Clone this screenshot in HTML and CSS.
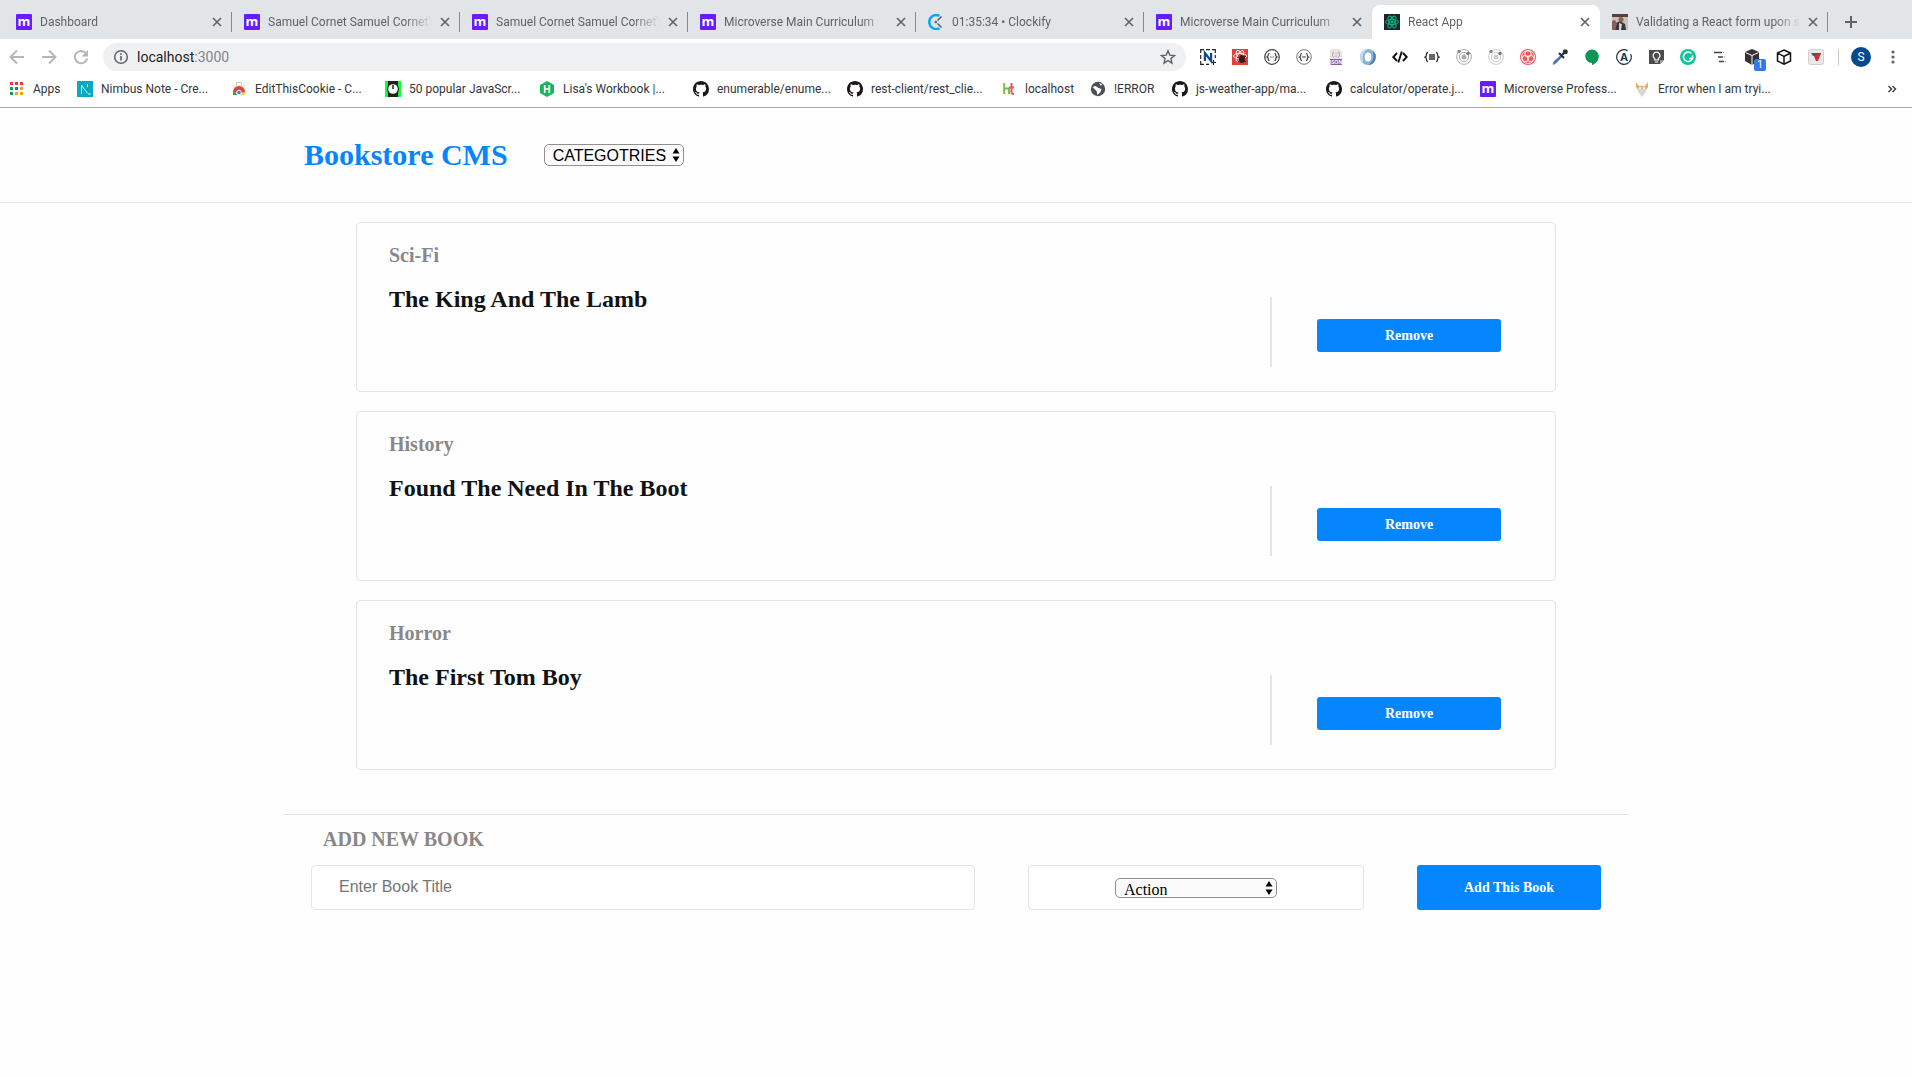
FILE: index.html
```html
<!DOCTYPE html>
<html lang="en">
<head>
<meta charset="utf-8">
<title>React App</title>
<link rel="stylesheet" href="styles.css">
</head>
<body>
<svg class="sprite" aria-hidden="true">
  <symbol id="close" viewBox="0 0 16 16"><path d="M4 4l8 8M12 4l-8 8" stroke="#5f6368" stroke-width="1.6" fill="none"/></symbol>
  <symbol id="micro" viewBox="0 0 16 16"><rect width="16" height="16" rx="1" fill="#6a1bff"/><text x="8" y="11.5" text-anchor="middle" class="micro-letter">m</text></symbol>
  <symbol id="github" viewBox="0 0 16 16"><path fill="#1b1817" d="M8 0C3.58 0 0 3.58 0 8c0 3.54 2.29 6.53 5.47 7.59.4.07.55-.17.55-.38 0-.19-.01-.82-.01-1.49-2.01.37-2.53-.49-2.69-.94-.09-.23-.48-.94-.82-1.13-.28-.15-.68-.52-.01-.53.63-.01 1.08.58 1.23.82.72 1.21 1.87.87 2.33.66.07-.52.28-.87.51-1.07-1.78-.2-3.64-.89-3.64-3.95 0-.87.31-1.59.82-2.15-.08-.2-.36-1.02.08-2.12 0 0 .67-.21 2.2.82.64-.18 1.32-.27 2-.27s1.36.09 2 .27c1.53-1.04 2.2-.82 2.2-.82.44 1.1.16 1.92.08 2.12.51.56.82 1.27.82 2.15 0 3.07-1.87 3.75-3.65 3.95.29.25.54.73.54 1.48 0 1.07-.01 1.93-.01 2.2 0 .21.15.46.55.38A8.01 8.01 0 0 0 16 8c0-4.42-3.58-8-8-8z"/></symbol>
  <symbol id="updown" viewBox="0 0 8 14"><path d="M4 0l3.500 5.500h-7zM4 14l3.500-5.500h-7z" fill="#000"/></symbol>
  <symbol id="atom" viewBox="0 0 16 16"><g fill="none" stroke="currentColor"><ellipse cx="8" cy="8" rx="6.500" ry="2.600"/><ellipse cx="8" cy="8" rx="6.500" ry="2.600" transform="rotate(60 8 8)"/><ellipse cx="8" cy="8" rx="6.500" ry="2.600" transform="rotate(120 8 8)"/></g><circle cx="8" cy="8" r="1.500" fill="currentColor"/></symbol>
  <symbol id="orbit" viewBox="0 0 16 16"><g fill="none" stroke="currentColor"><circle cx="8" cy="8" r="7.400"/><circle cx="8" cy="8" r="4.600"/></g><circle cx="8" cy="8" r="2.500" fill="currentColor"/><circle cx="3" cy="2.500" r="1.700" fill="#888"/><circle cx="12" cy="4.500" r="1.700" fill="#777"/></symbol>
</svg>

<div class="browser">
  <div class="tabs">
    <div class="tab"><svg class="icon"><use href="#micro"/></svg><span class="tab-title">Dashboard</span><button class="close" aria-label="Close tab"><svg class="icon"><use href="#close"/></svg></button></div>
    <div class="tab"><svg class="icon"><use href="#micro"/></svg><span class="tab-title">Samuel Cornet Samuel Cornet's</span><button class="close" aria-label="Close tab"><svg class="icon"><use href="#close"/></svg></button></div>
    <div class="tab"><svg class="icon"><use href="#micro"/></svg><span class="tab-title">Samuel Cornet Samuel Cornet's</span><button class="close" aria-label="Close tab"><svg class="icon"><use href="#close"/></svg></button></div>
    <div class="tab"><svg class="icon"><use href="#micro"/></svg><span class="tab-title">Microverse Main Curriculum</span><button class="close" aria-label="Close tab"><svg class="icon"><use href="#close"/></svg></button></div>
    <div class="tab"><svg class="icon" viewBox="0 0 16 16"><path d="M11.500 1.800A7 7 0 1 0 11.500 14.200" fill="none" stroke="#03a9f4" stroke-width="2.400"/><path d="M9.500 6.500L13.500 2.500M9.500 9.500l4 4" stroke="#5f6368" stroke-width="1.600"/><circle cx="7.800" cy="8" r="1.300" fill="#5f6368"/></svg><span class="tab-title">01:35:34 • Clockify</span><button class="close" aria-label="Close tab"><svg class="icon"><use href="#close"/></svg></button></div>
    <div class="tab"><svg class="icon"><use href="#micro"/></svg><span class="tab-title">Microverse Main Curriculum</span><button class="close" aria-label="Close tab"><svg class="icon"><use href="#close"/></svg></button></div>
    <div class="tab active"><svg class="icon react"><use href="#atom"/></svg><span class="tab-title">React App</span><button class="close" aria-label="Close tab"><svg class="icon"><use href="#close"/></svg></button></div>
    <div class="tab"><svg class="icon" viewBox="0 0 16 16"><rect width="16" height="16" fill="#c9c0bb"/><path d="M0 0h16v3H0z" fill="#54403b"/><path d="M3 16l1-7 4-2 5 3 1 6z" fill="#38353d"/><circle cx="9" cy="5.500" r="2.500" fill="#8b6253"/><path d="M0 7l3-1 2 4-2 6H0z" fill="#855f55"/><path d="M7 9l3 1-1 6H7z" fill="#d6d5dc"/></svg><span class="tab-title">Validating a React form upon submit</span><button class="close" aria-label="Close tab"><svg class="icon"><use href="#close"/></svg></button></div>
    <button class="new-tab" aria-label="New tab"><svg class="icon" viewBox="0 0 16 16"><path d="M8 2v12M2 8h12" stroke="#5f6368" stroke-width="2"/></svg></button>
  </div>

  <div class="toolbar">
    <div class="history">
      <button aria-label="Back"><svg class="icon" viewBox="0 0 16 16"><path d="M15 8H2M8 1.500L1.500 8 8 14.500" fill="none" stroke="#b5b7ba" stroke-width="2"/></svg></button>
      <button aria-label="Forward"><svg class="icon" viewBox="0 0 16 16"><path d="M1 8h13M8 1.500L14.500 8 8 14.500" fill="none" stroke="#b5b7ba" stroke-width="2"/></svg></button>
      <button aria-label="Reload"><svg class="icon" viewBox="0 0 16 16"><path d="M13 4.200A6.200 6.200 0 1 0 14.200 9.500" fill="none" stroke="#b5b7ba" stroke-width="2"/><path d="M15 1v6.500H8.500z" fill="#b5b7ba"/></svg></button>
    </div>
    <div class="omnibox">
      <svg class="icon" viewBox="0 0 16 16"><circle cx="8" cy="8" r="6.300" fill="none" stroke="#5f6368" stroke-width="1.500"/><path d="M8 7v4.500M8 4.300v1.600" stroke="#5f6368" stroke-width="1.600"/></svg>
      <span class="url">localhost<span class="port">:3000</span></span>
      <svg class="icon" viewBox="0 0 16 16"><path d="M8 1.800l1.800 4.300 4.700.4-3.600 3.100 1.100 4.600L8 11.700l-4 2.500 1.100-4.600L1.500 6.500l4.700-.4z" fill="none" stroke="#5f6368" stroke-width="1.400"/></svg>
    </div>
    <div class="extensions">
      <svg class="icon" viewBox="0 0 16 16"><path d="M.7 4V.7H4M6 .7h4M12 .7h3.300V4M.7 6v4M.7 12v3.300H4M6 15.300h3M15.300 6v3M11 13.500h5M13.500 11v5" fill="none" stroke="#222" stroke-width="1.200"/><path d="M4.900 12V4l6.200 8V4" fill="none" stroke="#0b4a94" stroke-width="2.200"/></svg>
      <svg class="icon" viewBox="0 0 16 16"><rect width="16" height="16" fill="#e2403a"/><g fill="none" stroke="#fff" stroke-width=".9"><ellipse cx="8" cy="7" rx="6.500" ry="2.600"/><ellipse cx="8" cy="7" rx="6" ry="2.500" transform="rotate(60 8 7)"/><ellipse cx="8" cy="7" rx="6" ry="2.500" transform="rotate(120 8 7)"/></g><ellipse cx="10" cy="10" rx="3" ry="4" fill="#321b1b"/><path d="M5 8l9 5M6 13l8-6" stroke="#321b1b"/></svg>
      <svg class="icon" viewBox="0 0 16 16"><circle cx="8" cy="8" r="7.300" fill="none" stroke="#444" stroke-width="1.200"/><path d="M5.500 4.500q-1.300 0-1.300 1.500T3 8q1.200.3 1.200 2t1.300 1.500M10.500 4.500q1.300 0 1.300 1.500T13 8q-1.200.3-1.200 2t-1.300 1.500" fill="none" stroke="#333" stroke-width="1.200"/><path d="M6 8h4" stroke="#555" stroke-dasharray="1 .5"/></svg>
      <svg class="icon" viewBox="0 0 16 16"><circle cx="8" cy="8" r="7.300" fill="none" stroke="#777"/><path d="M6 4.500q-1.300 0-1.300 1.500T3.500 8q1.200.3 1.200 2T6 11.500M10 4.500q1.300 0 1.300 1.500T12.500 8q-1.200.3-1.200 2T10 11.500M6 8h4" fill="none" stroke="#444" stroke-width="1.200"/></svg>
      <svg class="icon" viewBox="0 0 16 16"><path d="M2 0h9l3 3v13H2z" fill="#e7e5dc"/><path d="M2 10h12v6H2z" fill="#9158a3"/><path d="M6 3q-1 0-1 1.200T4 5.700q1 .3 1 1.500T6 8.500M10 3q1 0 1 1.200t1 1.500q-1 .3-1 1.500t-1 1.300M8 4v1M8 6.500v1.500" fill="none" stroke="#b296ba"/><text x="8" y="15" text-anchor="middle" class="json-letter">JSON</text></svg>
      <svg class="icon" viewBox="0 0 16 16"><circle cx="8" cy="8" r="8" fill="#8cb2d8"/><path d="M8 0a8 8 0 0 0-5 14c-1-7 0-11 5-14z" fill="#c7dcef"/><path d="M8 16a8 8 0 0 0 5-14c1 7 0 11-5 14z" fill="#4f80b5"/><ellipse cx="8" cy="8" rx="3.300" ry="4.500" fill="#fff"/></svg>
      <svg class="icon" viewBox="0 0 16 16"><path d="M5 4L1.300 8 5 12M11 4l3.700 4L11 12M9.800 2.500L6.300 13.500" fill="none" stroke="#111" stroke-width="1.900"/></svg>
      <svg class="icon" viewBox="0 0 16 16"><path d="M4 3.500q-1.500 0-1.500 2T1 8q1.500.4 1.500 2.500t1.500 2M12 3.500q1.500 0 1.500 2T15 8q-1.500.4-1.500 2.500t-1.500 2M5 6h6M5 8h6M5 10h6" fill="none" stroke="#333" stroke-width="1.300"/></svg>
      <svg class="icon orbit"><use href="#orbit"/></svg>
      <svg class="icon orbit faint"><use href="#orbit"/></svg>
      <svg class="icon" viewBox="0 0 16 16"><circle cx="8" cy="8" r="8" fill="#f4565b"/><g fill="none" stroke="#fff" stroke-width=".9"><circle cx="8" cy="5" r="3.200"/><circle cx="10.700" cy="9.500" r="3.200"/><circle cx="5.300" cy="9.500" r="3.200"/><circle cx="8" cy="8" r="6.500"/></g></svg>
      <svg class="icon" viewBox="0 0 16 16"><path d="M9 6l1.500 1.500-7 7L1 15.500 1.700 12.700z" fill="#4169d1" stroke="#7d8aa0" stroke-width=".7"/><path d="M7 4l5 5M9.500 6.500L14 2" stroke="#2d3036" stroke-width="2.200"/><circle cx="13.300" cy="2.700" r="2.500" fill="#2d3036"/></svg>
      <svg class="icon" viewBox="0 0 16 16"><path d="M8 .5a6.700 6.700 0 0 1 0 13.400V16C3.500 14.500 1.300 11 1.300 7.200A6.700 6.700 0 0 1 8 .5z" fill="#0b9557" transform="matrix(-1 0 0 1 16 0)"/></svg>
      <svg class="icon" viewBox="0 0 16 16"><circle cx="8" cy="8" r="7.300" fill="none" stroke="#1f3352" stroke-width="1.200" stroke-dasharray="41 5" transform="rotate(-25 8 8)"/><text x="8" y="12" text-anchor="middle" class="apollo-letter">A</text></svg>
      <svg class="icon" viewBox="0 0 16 16"><path d="M1 1h15v10l-4 4H1z" fill="#4c4c4c"/><path d="M12 15v-4h4z" fill="#9a9a9a"/><path d="M6.700 11V9.500a3.400 3.400 0 1 1 3.600 0V11zM7 13h3" fill="none" stroke="#fff" stroke-width="1.200"/></svg>
      <svg class="icon" viewBox="0 0 16 16"><circle cx="8" cy="8" r="8" fill="#12c29a"/><path d="M11.500 4.500a4.700 4.700 0 1 0 1 5H9M12.500 6.500v4" fill="none" stroke="#fff" stroke-width="1.600"/></svg>
      <svg class="icon" viewBox="0 0 16 16"><path d="M2 3.500h8M6 8h5M7 12.500h5" stroke="#444" stroke-width="1.300"/><path d="M11 3.500h1M12 8h1M13 12.500h1" stroke="#888"/></svg>
      <span class="counted"><svg class="icon" viewBox="0 0 16 16"><path d="M8 0l7 3v9l-7 4-7-4V3z" fill="#333"/><path d="M1.500 3.500L8 6.500l6.500-3M8 6.500V16" fill="none" stroke="#fff" stroke-width="1"/></svg><span class="count">1</span></span>
      <svg class="icon" viewBox="0 0 16 16"><path d="M8 1l6.500 3v8L8 15.200 1.500 12V4zM1.500 4L8 7.500 14.500 4M8 7.500v7.700" fill="none" stroke="#111" stroke-width="1.500"/></svg>
      <svg class="icon" viewBox="0 0 16 16"><rect x=".5" y=".5" width="15" height="15" rx="2" fill="#e9e9e9" stroke="#cfcfcf"/><path d="M3 4h10l-1 3H5z" fill="#555"/><path d="M6 7l7-3-3 8H8z" fill="#d92b2b"/></svg>
    </div>
    <span class="divider"></span>
    <button class="avatar" aria-label="Profile">S</button>
    <button class="menu" aria-label="Menu"><svg class="icon" viewBox="0 0 16 16"><g fill="#5f6368"><circle cx="8" cy="3" r="1.600"/><circle cx="8" cy="8" r="1.600"/><circle cx="8" cy="13" r="1.600"/></g></svg></button>
  </div>

  <nav class="bookmarks" aria-label="Bookmarks">
    <a class="apps" href="#"><svg class="icon" viewBox="0 0 16 16"><g><path d="M1 1h3v3H1zM6 1h3v3H6zM11 1h3v3h-3z" fill="#ee3a32"/><path d="M1 6h3v3H1zM1 11h3v3H1z" fill="#1e9a55"/><path d="M6 6h3v3H6z" fill="#1a73e8"/><path d="M11 6h3v3h-3zM6 11h3v3H6zM11 11h3v3h-3z" fill="#f3a126"/></g></svg>Apps</a>
    <a class="wide" href="#"><svg class="icon" viewBox="0 0 16 16"><rect width="16" height="16" fill="#09a9c2"/><path d="M4.500 13V4l6 8.500M10.500 3v3M11 13h3" fill="none" stroke="#c8f0f5"/></svg>Nimbus Note - Cre...</a>
    <a class="wide" href="#"><svg class="icon" viewBox="0 0 16 16"><path d="M2 4h12v10H2z" fill="#e8e8e8"/><path d="M5.500 4V1.500h5V4" fill="none" stroke="#ccc"/><path d="M2 11a6 6 0 0 1 12 0l-4 1H6z" fill="#dd4436"/><path d="M2 10v4h5z" fill="#2ba24c"/><path d="M14 11v3H8z" fill="#fccd36"/><circle cx="8" cy="11.500" r="2.300" fill="#3d7ee8" stroke="#fff"/></svg>EditThisCookie - C...</a>
    <a class="wide" href="#"><svg class="icon" viewBox="0 0 16 16"><rect width="16" height="16" fill="#0bff37"/><path d="M3 0h10v4l1 4-1 4v4H3v-4L2 8l1-4z" fill="#222"/><circle cx="8" cy="8" r="4.800" fill="#fff"/><path d="M8 8V4" stroke="#222" stroke-width="1.500"/></svg>50 popular JavaScr...</a>
    <a class="wide" href="#"><svg class="icon" viewBox="0 0 16 16"><path d="M8 0l7 4v8l-7 4-7-4V4z" fill="#18b55b"/><path d="M5.700 4v8M10.300 4v8M5.700 8h4.600" stroke="#fff" stroke-width="1.700"/></svg>Lisa's Workbook |...</a>
    <a class="wide" href="#"><svg class="icon"><use href="#github"/></svg>enumerable/enume...</a>
    <a class="wide" href="#"><svg class="icon"><use href="#github"/></svg>rest-client/rest_clie...</a>
    <a class="host" href="#"><svg class="icon" viewBox="0 0 16 16"><path d="M3.200 2v11M3.200 7.500H9M8 7.500V13" fill="none" stroke="#75bd45" stroke-width="2"/><path d="M10.500 2v9.500q0 1.500 2.500 1.500M8 6.500h5" fill="none" stroke="#ee5261" stroke-width="2"/></svg>localhost</a>
    <a class="error" href="#"><svg class="icon" viewBox="0 0 16 16"><circle cx="8" cy="8" r="7.200" fill="#4b4f54"/><path d="M2.500 6l3-1 3 2 3 1-1 3-3 3-1-4zM9 2l3 1-1 2z" fill="#fff"/></svg>!ERROR</a>
    <a class="wide" href="#"><svg class="icon"><use href="#github"/></svg>js-weather-app/ma...</a>
    <a class="wide" href="#"><svg class="icon"><use href="#github"/></svg>calculator/operate.j...</a>
    <a class="wide" href="#"><svg class="icon"><use href="#micro"/></svg>Microverse Profess...</a>
    <a class="wide" href="#"><svg class="icon" viewBox="0 0 16 16"><path d="M2 1l3 4h6l3-4v5l-3 5H5L2 6z" fill="#e9ad65"/><path d="M4 7l4 1 4-1v4l-4 5-4-5z" fill="#d9d8d6"/><circle cx="6" cy="7" r="1" fill="#fff"/><circle cx="10" cy="7" r="1" fill="#fff"/></svg>Error when I am tryi...</a>
    <button class="more" aria-label="More bookmarks"><svg class="icon" viewBox="0 0 16 16"><path d="M4.500 5l3 3-3 3M8.500 5l3 3-3 3" fill="none" stroke="#444" stroke-width="1.500"/></svg></button>
  </nav>
</div>

<header class="site-header">
  <div class="header-inner">
    <h1>Bookstore CMS</h1>
    <span class="picker filter">
      <select aria-label="Filter by category"><option>CATEGOTRIES</option></select>
      <svg class="arrows"><use href="#updown"/></svg>
    </span>
  </div>
</header>

<main>
  <section class="books">
    <article class="book">
      <div class="info"><h3>Sci-Fi</h3><h2>The King And The Lamb</h2></div>
      <div class="actions"><button class="primary">Remove</button></div>
    </article>
    <article class="book">
      <div class="info"><h3>History</h3><h2>Found The Need In The Boot</h2></div>
      <div class="actions"><button class="primary">Remove</button></div>
    </article>
    <article class="book">
      <div class="info"><h3>Horror</h3><h2>The First Tom Boy</h2></div>
      <div class="actions"><button class="primary">Remove</button></div>
    </article>
  </section>

  <section class="add-book">
    <h3>ADD NEW BOOK</h3>
    <form>
      <input class="field" type="text" placeholder="Enter Book Title" aria-label="Book title">
      <div class="field select-field">
        <span class="picker category">
          <select aria-label="Category"><option>Action</option></select>
          <svg class="arrows"><use href="#updown"/></svg>
        </span>
      </div>
      <button class="primary" type="button">Add This Book</button>
    </form>
  </section>
</main>
</body>
</html>
```
FILE: styles.css
```css
* {
  box-sizing: border-box;
}

body {
  margin: 0;
  background: #fefefe;
  font-family: "Liberation Serif", "Times New Roman", serif;
}

h1, h2, h3 {
  margin: 0;
}

button {
  border: 0;
  padding: 0;
  background: none;
  font: inherit;
}

.sprite {
  display: none;
}

.icon {
  display: block;
  flex: none;
  width: 16px;
  height: 16px;
}

/* Browser window */
.browser {
  background: #fff;
  border-bottom: 1px solid #a9a9a9;
  font-family: Roboto, sans-serif;
  font-size: 12px;
  color: #333639;
}

.tabs {
  display: flex;
  height: 39px;
  padding: 5px 0 0 4px;
  background: #e1e5e8;
}

.tab {
  display: flex;
  align-items: center;
  flex: 0 1 228px;
  min-width: 0;
  padding: 0 7px 0 12px;
  color: #5f6368;
  background: linear-gradient(#85888b, #85888b) right 7px / 1px 20px no-repeat;
}

.tab:has(+ .active) {
  background: none;
}

.tab.active {
  background: #fff;
  border-radius: 8px 8px 0 0;
}

.tab-title {
  flex: 1;
  min-width: 0;
  margin: 0 4px 0 8px;
  overflow: hidden;
  white-space: nowrap;
  mask-image: linear-gradient(90deg, #000 calc(100% - 28px), transparent);
}

.new-tab {
  padding: 0 15px;
}

.react {
  background: #20252c;
  color: #08b487;
}

.toolbar {
  display: flex;
  align-items: center;
  height: 36px;
  padding: 0 11px 0 9px;
}

.history {
  display: flex;
  gap: 16px;
}

.omnibox {
  display: flex;
  align-items: center;
  flex: 1;
  height: 28px;
  margin: 0 14px;
  padding: 0 10px;
  border-radius: 14px;
  background: #eff0f2;
}

.url {
  flex: 1;
  padding-left: 8px;
  font-size: 14px;
  color: #202124;
}

.port {
  color: #80868b;
}

.extensions {
  display: flex;
  gap: 16px;
}

.orbit {
  color: #aaa;
}

.faint {
  color: #ccc;
}

.counted {
  position: relative;
}

.count {
  position: absolute;
  left: 10px;
  top: 10px;
  width: 12px;
  border-radius: 2px;
  background: #3478f0;
  color: #fff;
  font-size: 10px;
  line-height: 12px;
  text-align: center;
}

.divider {
  width: 1px;
  height: 16px;
  margin: 0 12px 0 14px;
  background: #c4c6c8;
}

.avatar {
  width: 20px;
  height: 20px;
  margin-right: 14px;
  border-radius: 50%;
  background: #04498d;
  color: #fff;
}

.bookmarks {
  display: flex;
  align-items: center;
  height: 32px;
  padding: 0 12px 4px 9px;
}

.bookmarks a {
  display: flex;
  align-items: center;
  gap: 8px;
  flex: 0 1 154px;
  min-width: 0;
  overflow: hidden;
  white-space: nowrap;
  color: inherit;
  text-decoration: none;
}

.bookmarks .apps {
  flex-basis: 68px;
}

.bookmarks .host {
  flex-basis: 89px;
}

.bookmarks .error {
  flex-basis: 82px;
}

.more {
  margin-left: auto;
}

.micro-letter {
  font: 700 13px "Open Sans", sans-serif;
  fill: #fff;
}

.json-letter {
  font: 700 5px "Open Sans", sans-serif;
  fill: #fff;
}

.apollo-letter {
  font: 700 11px "Open Sans", sans-serif;
  fill: #1f3352;
}

/* Bookstore page */
.site-header {
  border-bottom: 1px solid #e4e4e4;
}

.header-inner {
  display: flex;
  align-items: center;
  gap: 36px;
  max-width: 1344px;
  height: 94px;
  margin: 0 auto;
  padding: 0 20px;
}

h1 {
  font-size: 30px;
  line-height: 34px;
  color: #0586ff;
}

.picker {
  position: relative;
  display: block;
}

.picker select {
  display: block;
  width: 100%;
  height: 100%;
  appearance: none;
  border: 1px solid #8f8f8f;
  border-radius: 5px;
  background: #fbfbfb;
  color: #000;
  font-size: 16px;
}

.filter {
  width: 140px;
  height: 22px;
}

.filter select {
  padding: 0 8px;
  font-family: "Liberation Sans", Arial, sans-serif;
}

.category {
  width: 162px;
  height: 20px;
}

.category select {
  padding: 2px 8px 0;
  font-family: inherit;
}

.arrows {
  position: absolute;
  right: 4px;
  top: calc(50% - 7px);
  width: 8px;
  height: 14px;
  pointer-events: none;
}

.books {
  display: flex;
  flex-direction: column;
  gap: 19px;
  max-width: 1200px;
  margin: 19px auto 44px;
}

.book {
  display: flex;
  justify-content: space-between;
  min-height: 170px;
  padding: 20px 0 24px 32px;
  border: 1px solid #e4e4e4;
  border-radius: 4px;
}

.info {
  display: flex;
  flex-direction: column;
  gap: 18px;
}

h3 {
  font-size: 20px;
  line-height: 24px;
  color: #888;
}

h2 {
  font-size: 24px;
  line-height: 28px;
  color: #121212;
}

.actions {
  align-self: flex-end;
  padding: 22px 54px 15px 45px;
  border-left: 2px solid #e4e4e4;
}

.primary {
  width: 184px;
  height: 33px;
  border-radius: 3px;
  background: #0586ff;
  color: #fff;
  font-size: 14px;
  font-weight: 700;
}

.add-book {
  max-width: 1344px;
  margin: 0 auto;
  padding: 12px 27px;
  border-top: 1px solid #e4e4e4;
}

.add-book h3 {
  padding-left: 12px;
}

form {
  display: grid;
  grid-template-columns: 83fr 42fr 184px;
  gap: 53px;
  margin-top: 14px;
}

form .primary {
  height: 45px;
}

.field {
  min-width: 0;
  height: 45px;
  border: 1px solid #e4e4e4;
  border-radius: 4px;
  background: #fff;
}

input.field {
  padding: 0 27px 2px;
  font-family: "Liberation Sans", Arial, sans-serif;
  font-size: 16px;
}

.field::placeholder {
  color: #757575;
}

.select-field {
  display: flex;
  align-items: center;
  justify-content: center;
}
```
